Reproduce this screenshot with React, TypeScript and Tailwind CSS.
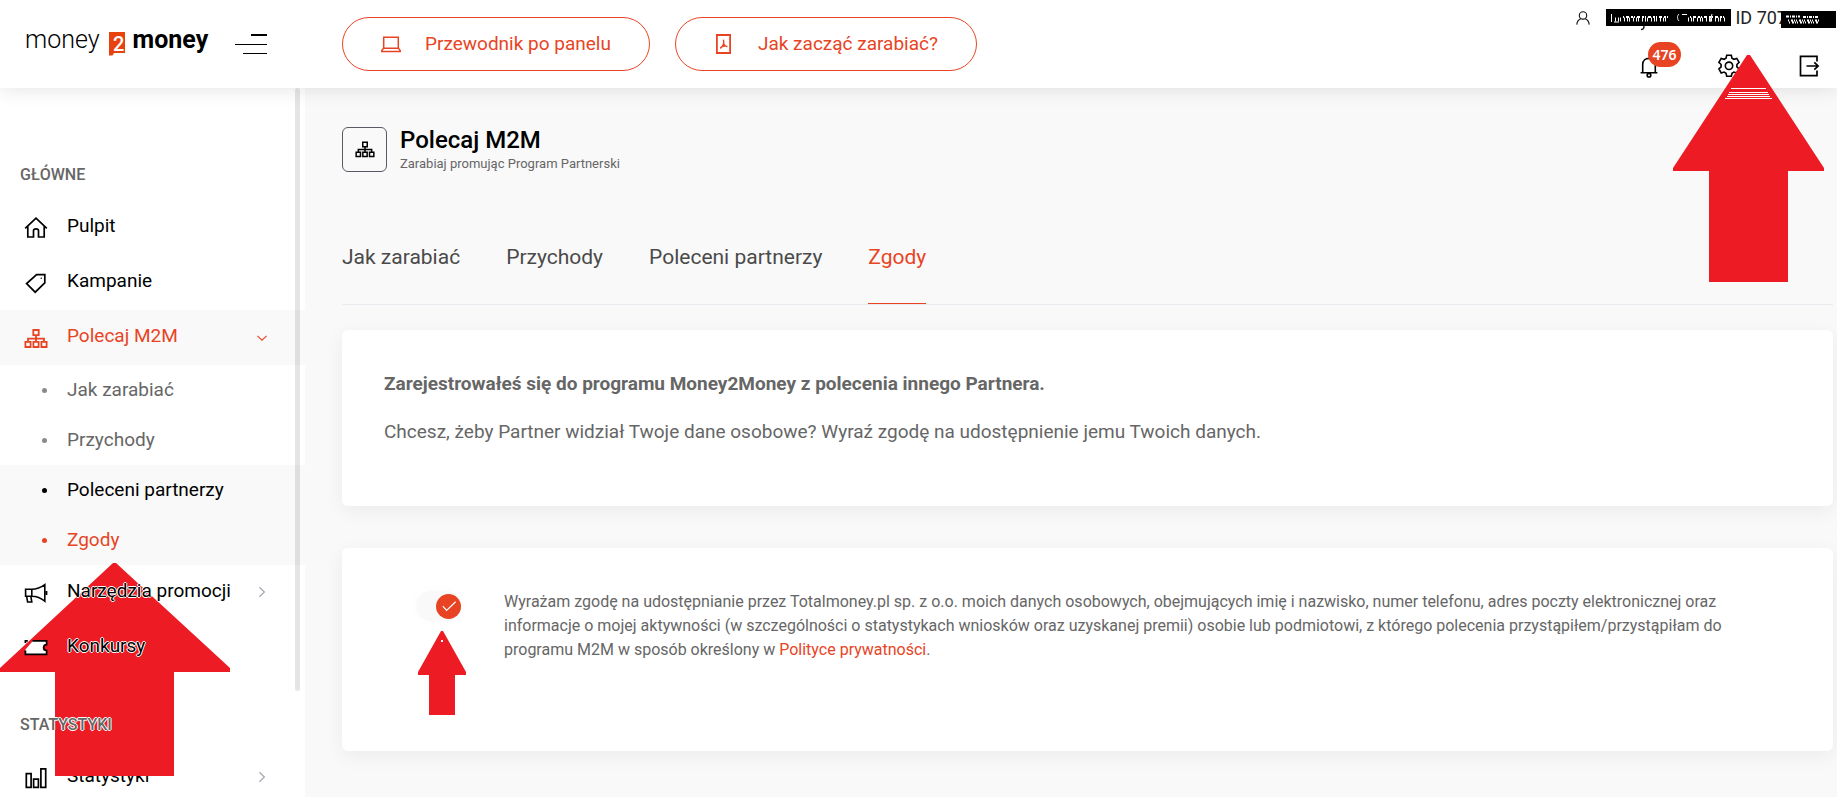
import React, { useState } from "react";

type IconProps = { className?: string };

function HomeIcon({ className }: IconProps) {
  return (
    <svg viewBox="0 0 24 24" className={className} fill="none" stroke="currentColor" strokeWidth="1.7">
      <path d="M1.2 12.3 12 2.2l10.8 10.1M3.8 10.4V21h5.7v-6.2c0-2.6 5-2.6 5 0V21h5.7V10.4" />
    </svg>
  );
}

function TagIcon({ className }: IconProps) {
  return (
    <svg viewBox="0 0 24 24" className={className} fill="none" stroke="currentColor" strokeWidth="1.7">
      <path d="M12.6 3.6h8.2v8.2L11.2 21.2 2.6 12.6z" />
      <circle cx="17.2" cy="7.2" r=".7" fill="currentColor" stroke="none" />
    </svg>
  );
}

function SitemapIcon({ className }: IconProps) {
  return (
    <svg viewBox="0 0 24 24" className={className} fill="none" stroke="currentColor" strokeWidth="1.8">
      <path d="M9.3 4h5.4v5.2H9.3zM1.4 15.8h5.2V21H1.4zM9.4 15.8h5.2V21H9.4zM17.4 15.8h5.2V21h-5.2zM12 9.2v6.6M4 15.8v-3.2h16v3.2" />
    </svg>
  );
}

function MegaphoneIcon({ className }: IconProps) {
  return (
    <svg viewBox="0 0 24 24" className={className} fill="none" stroke="currentColor" strokeWidth="1.6">
      <path d="M1.6 8.2h6.2v7H1.6zM7.8 8.2c5 0 9-1.6 13-4.6v16.6c-4-3.4-8-5-13-5M2.6 15.2l1 5.8h4.2l-1-5.8" />
      <path d="M22.4 10v4" strokeWidth="2" />
    </svg>
  );
}

function TicketIcon({ className }: IconProps) {
  return (
    <svg viewBox="0 0 24 24" className={className}>
      <path d="M9 4.8h13.6v3.8a3 3 0 0 0 0 6v3.8H1.4v-5z" fill="#fff" />
      <path
        d="M8.4 4.8h14.2v3.8a3 3 0 0 0 0 6v3.8H1.4v-4M1.4 7V4.8h2.4"
        fill="none"
        stroke="currentColor"
        strokeWidth="1.7"
      />
    </svg>
  );
}

function ChartIcon({ className }: IconProps) {
  return (
    <svg viewBox="0 0 24 24" className={className} fill="none" stroke="currentColor" strokeWidth="1.7">
      <path d="M2.3 7.6h4.8v13.8H2.3zM9.6 13.2h4.8v8.2H9.6zM16.9 2.8h4.8v18.6h-4.8z" />
    </svg>
  );
}

function Chevron({ open }: { open?: boolean }) {
  return open ? (
    <svg viewBox="0 0 12 12" className="mt-1 h-3 w-3" fill="none" stroke="#e84424" strokeWidth="1.1">
      <path d="m1.4 3.8 4.6 4.4 4.6-4.4" />
    </svg>
  ) : (
    <svg viewBox="0 0 12 12" className="mt-0.5 h-3 w-3" fill="none" stroke="#a6a6b4" strokeWidth="1.2">
      <path d="m3.4 1.2 5 4.8-5 4.8" />
    </svg>
  );
}

const RED = "#ed1c24";

const subItems = [
  { label: "Jak zarabiać", style: "text-[#666]", dot: "bg-[#8a8a8a]" },
  { label: "Przychody", style: "text-[#666]", dot: "bg-[#8a8a8a]" },
  { label: "Poleceni partnerzy", style: "bg-[#f9f9f9] text-black", dot: "bg-black" },
  { label: "Zgody", style: "bg-[#f9f9f9] text-[#e84424]", dot: "bg-[#e84424]" },
];

const tabs = ["Jak zarabiać", "Przychody", "Poleceni partnerzy", "Zgody"];

// white outline that keeps labels readable over the arrow
const halo =
  "relative z-20 [text-shadow:1px_0_0_#fff,-1px_0_0_#fff,0_1px_0_#fff,0_-1px_0_#fff]";

function NavItem({
  label,
  icon: Icon,
  arrow,
  active,
  labelClass = "",
  iconClass = "",
}: {
  label: string;
  icon: React.ComponentType<IconProps>;
  arrow?: boolean;
  active?: boolean;
  labelClass?: string;
  iconClass?: string;
}) {
  return (
    <a
      href="#"
      className={`flex h-[55px] shrink-0 items-center pr-[37px] pb-[3px] pl-6 ${
        active ? "bg-[#f9f9f9] text-[#e84424]" : "text-black"
      }`}
    >
      <Icon className={`mt-[3px] h-6 w-6 ${iconClass}`} />
      <span className={`ml-[19px] flex-1 text-[19px] leading-7 ${labelClass}`}>{label}</span>
      {arrow && <Chevron open={active} />}
    </a>
  );
}

function Logo() {
  return (
    <a href="#" className="flex items-center text-[25px] leading-8 text-black">
      <span className="font-light">money</span>
      <span className="relative ml-[9px] mt-2 flex h-6 w-4 items-center justify-center">
        <svg viewBox="0 0 16 24" className="absolute inset-0 h-6 w-4">
          <path d="M0 0h16v21H5l-1.5 2.5H0z" fill="#e8420f" />
        </svg>
        <span className="relative pl-1 text-xl leading-6 font-medium text-white">2</span>
      </span>
      <span className="ml-2 font-bold">money</span>
    </a>
  );
}

function Header() {
  return (
    <header className="relative z-10 flex h-[88px] shrink-0 items-center bg-white pr-4 shadow-[0_0_20px_rgba(0,0,0,0.12)]">
      <div className="flex w-[342px] shrink-0 items-center pl-[25px]">
        <div className="-mt-2 w-[210px]">
          <Logo />
        </div>
        <button type="button" aria-label="Menu" className="flex w-8 flex-col items-end gap-2">
          <span className="h-0.5 w-4 bg-black" />
          <span className="h-px w-8 bg-black" />
          <span className="h-px w-6 bg-black" />
        </button>
      </div>

      <div className="flex gap-[25px] text-[19px] text-[#e84424]">
        <button
          type="button"
          className="flex h-[54px] items-center gap-6 rounded-full border border-[#e84424] px-[38px]"
        >
          <svg viewBox="0 0 20 20" className="h-5 w-5" fill="none" stroke="currentColor" strokeWidth="1.5">
            <path d="M2.7 3.2h14.6v11H2.7zM2.4 14.4.8 16.6v1h18.4v-1l-1.6-2.2" />
          </svg>
          Przewodnik po panelu
        </button>
        <button
          type="button"
          className="flex h-[54px] items-center gap-6 rounded-full border border-[#e84424] px-[38px]"
        >
          <svg viewBox="0 0 20 20" className="h-5 w-5" fill="none" stroke="currentColor" strokeWidth="1.8">
            <path d="M2.9 1h13.2v18H2.9z" />
            <path d="M9.4 5.6c1.1 3.6-.4 6.8-3.2 8.8M9.6 9.4c.8 1.9 2 2.9 3.8 3.4M6.4 13.6c2-1.4 4.4-1.7 7-1.2" strokeWidth="1.4" />
          </svg>
          Jak zacząć zarabiać?
        </button>
      </div>

      <div className="ml-auto flex flex-col items-end self-start">
        <div className="-mr-4 flex h-9 items-center">
          <svg viewBox="0 0 14 14" className="mr-4 h-[14px] w-[14px]" fill="none" stroke="#111" strokeWidth="1.1">
            <circle cx="7" cy="4.4" r="3.7" />
            <path d="M.8 13.6c.3-3 2-5 4-5.8M13.2 13.6c-.3-3-2-5-4-5.8" />
          </svg>
          <svg viewBox="0 0 125 22" className="mt-1 h-[22px] w-[125px]">
            <path d="M38 17c0 2.4-.6 3.6-3 3.6" fill="none" stroke="#222" strokeWidth="1.5" />
            <rect width="125" height="17" fill="#000" />
            <path d="M5.500 5v8M8 13h5M106 5l-2 8" stroke="#fff" />
            <path d="M17 8h47M84 8h35" stroke="#fff" strokeWidth="2" strokeDasharray="1 2 3 2 2 1" />
            <path d="M9 10.500h54M82 10.500h37" stroke="#fff" strokeWidth="4" strokeDasharray="1 2 1 1 1 3" />
            <path d="M73 5c-2 2-2 5 0 7M76 5.500h5" fill="none" stroke="#fff" />
          </svg>
          <span className="ml-1 text-lg leading-6 whitespace-nowrap text-[#222]">ID 707</span>
          <svg viewBox="0 0 56 17" className="relative mt-[3px] -ml-[6px] h-[17px] w-14">
            <rect width="55" height="17" fill="#000" />
            <path d="M5 5.500h14M22 6h16" stroke="#fff" strokeWidth="2" strokeDasharray="3 1 1 1" />
            <path d="M7 9.500h31M8 11.500h30" stroke="#fff" strokeWidth="2" strokeDasharray="1 2 2 1 1 1" />
          </svg>
        </div>
        <div className="mt-[18px] flex items-center gap-14">
          <button type="button" aria-label="Powiadomienia" className="relative">
            <svg viewBox="0 0 24 24" className="h-6 w-6" fill="none" stroke="#000" strokeWidth="1.6">
              <path d="M3.600 18.800h16.800M5.700 18.500V10.500c0-8.200 12.600-8.200 12.600 0v8" />
              <circle cx="12" cy="21.200" r="1.800" />
            </svg>
            <span className="absolute -top-3 left-[11px] flex h-[25px] w-[33px] items-center justify-center rounded-full bg-[#e84424] font-['Noto_Sans'] text-sm font-semibold text-white">
              476
            </span>
          </button>
          <button type="button" aria-label="Ustawienia">
            <svg viewBox="0 0 24 24" className="h-6 w-6" fill="none" stroke="#000" strokeWidth="1.6">
              <path d="M9.700 1.200h4.600l.7 3 1.900 1.100 2.900-.9 2.300 4-2.200 2.100v2.400l2.200 2.100-2.300 4-2.900-.9-1.900 1.100-.7 3H9.700l-.7-3-1.900-1.100-2.900.9-2.300-4 2.200-2.100v-2.400L1.900 8.400l2.300-4 2.900.9L9 4.200z" />
              <circle cx="12" cy="11.800" r="3.700" />
            </svg>
          </button>
          <button type="button" aria-label="Wyloguj">
            <svg viewBox="0 0 24 24" className="h-6 w-6" fill="none" stroke="#000" strokeWidth="1.7">
              <path d="M20 7.500V2.300H3.500v19.400H20v-5.200M9.500 12h11.300M17.300 8.400l3.800 3.600-3.800 3.600" />
            </svg>
          </button>
        </div>
      </div>
    </header>
  );
}

function Sidebar() {
  return (
    <aside className="relative flex w-[305px] shrink-0 flex-col overflow-hidden bg-white">
      <div className="absolute top-0 right-[5px] z-30 h-[85%] w-[5px] rounded-full bg-black/10" />
      <svg
        aria-hidden="true"
        viewBox="0 0 230 213"
        className="pointer-events-none absolute top-[475px] left-0 z-10 h-[213px] w-[230px]"
      >
        <path d="M113 0h3L230 105v4h-56v104H55V109H0v-4z" fill={RED} />
      </svg>
      <nav className="flex flex-col pt-[62px]">
        <h2 className="flex h-[50px] items-center pl-5 text-base font-medium text-[#666]">GŁÓWNE</h2>
        <NavItem label="Pulpit" icon={HomeIcon} />
        <NavItem label="Kampanie" icon={TagIcon} />
        <NavItem label="Polecaj M2M" icon={SitemapIcon} arrow active />
        {subItems.map((item) => (
          <a key={item.label} href="#" className={`flex h-[50px] items-center text-[19px] leading-7 ${item.style}`}>
            <span className={`ml-[42px] h-[5px] w-[5px] rounded-full ${item.dot}`} />
            <span className="ml-5">{item.label}</span>
          </a>
        ))}
        <NavItem label="Narzędzia promocji" icon={MegaphoneIcon} arrow labelClass={halo} />
        <NavItem label="Konkursy" icon={TicketIcon} labelClass={halo} iconClass="relative z-20" />
        <h2 className="mt-[25px] flex h-[50px] items-center pl-5 text-base font-medium text-[#666]">
          <span className={halo}>STATYSTYKI</span>
        </h2>
        <NavItem label="Statystyki" icon={ChartIcon} arrow />
      </nav>
    </aside>
  );
}

export default function App() {
  const [tab, setTab] = useState("Zgody");
  const [agreed, setAgreed] = useState(true);

  return (
    <div className="relative flex h-screen flex-col overflow-hidden bg-[#f9f9f9] font-[Roboto,sans-serif] text-[#666]">
      <Header />
      <div className="flex min-h-0 flex-1">
        <Sidebar />
        <main className="min-w-0 flex-1 pt-[39px] pr-1 pl-[37px]">
          <div className="flex h-[45px] items-center gap-[13px]">
            <div className="flex h-[45px] w-[45px] items-center justify-center rounded-md border border-[#5b5966] pb-0.5 text-black">
              <SitemapIcon className="h-5 w-5" />
            </div>
            <div>
              <h1 className="text-2xl leading-7 font-medium text-black">Polecaj M2M</h1>
              <p className="text-[13px] leading-5">Zarabiaj promując Program Partnerski</p>
            </div>
          </div>

          <div role="tablist" className="mt-[69px] flex gap-[46px] border-b border-[#ebebf2] text-[21px] leading-8">
            {tabs.map((name) => (
              <button
                key={name}
                type="button"
                role="tab"
                aria-selected={tab === name}
                onClick={() => setTab(name)}
                className={`border-b pb-[30px] ${
                  tab === name ? "border-[#e84424] text-[#e84424]" : "border-transparent text-[#4a4a4a]"
                }`}
              >
                {name}
              </button>
            ))}
          </div>

          <section className="mt-[25px] rounded-md bg-white px-[42px] pt-[42px] pb-[62px] text-[19px] leading-6 shadow-[0_5px_20px_rgba(0,0,0,0.06)]">
            <p className="font-bold">Zarejestrowałeś się do programu Money2Money z polecenia innego Partnera.</p>
            <p className="mt-6">
              Chcesz, żeby Partner widział Twoje dane osobowe? Wyraź zgodę na udostępnienie jemu Twoich danych.
            </p>
          </section>

          <section className="mt-[42px] flex items-start rounded-md bg-white px-[42px] pt-[42px] pb-[89px] shadow-[0_5px_20px_rgba(0,0,0,0.06)]">
            <div className="relative ml-8 mt-px w-[88px] shrink-0">
              <input
                id="consent"
                type="checkbox"
                checked={agreed}
                onChange={(e) => setAgreed(e.target.checked)}
                className="peer absolute h-[30px] w-[46px] opacity-0"
              />
              <label
                htmlFor="consent"
                aria-label="Zgoda"
                className={`flex h-[30px] w-[46px] items-center rounded-full bg-[#f9f9f9] px-px shadow-[0_0_15px_rgba(0,0,0,0.02)] ${
                  agreed ? "justify-end" : "justify-start"
                }`}
              >
                <span className="flex h-[25px] w-[25px] items-center justify-center rounded-full bg-[#e84424]">
                  <svg viewBox="0 0 16 16" className="h-4 w-4" fill="none" stroke="#fff" strokeWidth="1.2">
                    <path d="m1.800 8.200 3.800 4.200 9-8.600" />
                  </svg>
                </span>
              </label>
              <svg
                aria-hidden="true"
                viewBox="0 0 48 84"
                className="pointer-events-none absolute top-10 left-0.5 h-[84px] w-12"
              >
                <path d="M23 0h2l23 41v3H37v40H11V44H0v-3z" fill={RED} />
                <rect x="23" y="9" width="2" height="2" fill="#fff" />
              </svg>
            </div>
            <label htmlFor="consent" className="text-base leading-6">
              Wyrażam zgodę na udostępnianie przez Totalmoney.pl sp. z o.o. moich danych osobowych, obejmujących imię
              i nazwisko, numer telefonu, adres poczty elektronicznej oraz informacje o mojej aktywności (w
              szczególności o statystykach wniosków oraz uzyskanej premii) osobie lub podmiotowi, z którego polecenia
              przystąpiłem/przystąpiłam do programu M2M w sposób określony w{" "}
              <a href="#" className="text-[#e84424]">
                Polityce prywatności
              </a>
              .
            </label>
          </section>
        </main>
      </div>

      <svg
        aria-hidden="true"
        viewBox="0 0 151 227"
        className="pointer-events-none absolute top-[55px] right-[13px] z-20 h-[227px] w-[151px]"
      >
        <path d="M74 0h3l74 113v3h-36v111H36V116H0v-3z" fill={RED} />
        <path d="M58 33.500h35M56 37.500h39M55 39.500h41M54 41.500h43M52 43.500h47" stroke="#fff" />
      </svg>
    </div>
  );
}
